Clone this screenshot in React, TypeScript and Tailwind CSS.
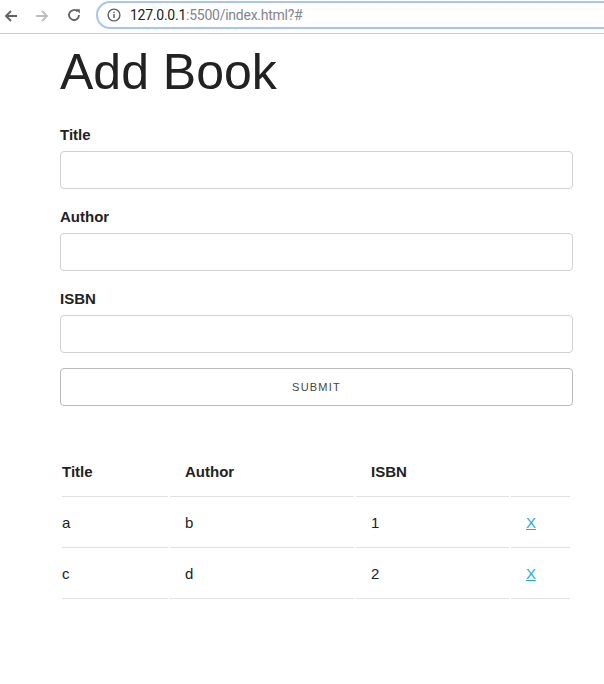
import React from "react";

function Chrome() {
  return (
    <div className="h-[34px] border-b border-[#c9c9c9] bg-white flex items-center relative overflow-hidden">
      <svg className="absolute left-[3px] top-[8px]" width="16" height="16" viewBox="0 0 16 16">
        <path d="M14 8H3M8 3L3 8l5 5" fill="none" stroke="#5f6368" strokeWidth="1.8" />
      </svg>
      <svg className="absolute left-[34px] top-[8px]" width="16" height="16" viewBox="0 0 16 16">
        <path d="M2 8h11M8 3l5 5-5 5" fill="none" stroke="#bdbdbd" strokeWidth="1.8" />
      </svg>
      <svg className="absolute left-[66px] top-[7px]" width="16" height="16" viewBox="0 0 16 16">
        <path d="M13 8a5 5 0 1 1-1.5-3.6" fill="none" stroke="#5f6368" strokeWidth="1.8" />
        <path d="M9.5 2.2h4.3v4.3z" fill="#5f6368" />
      </svg>
      <div className="absolute left-[96px] top-[1px] w-[540px] h-[28px] rounded-full border-2 border-[#a8c4f5] flex items-center">
        <svg className="ml-[9px]" width="14" height="14" viewBox="0 0 14 14">
          <circle cx="7" cy="7" r="5.9" fill="none" stroke="#5f6368" strokeWidth="1.4" />
          <rect x="6.25" y="6" width="1.5" height="4" fill="#5f6368" />
          <rect x="6.25" y="3.6" width="1.5" height="1.5" fill="#5f6368" />
        </svg>
        <span className="ml-[9px] text-[14px] tracking-[-0.25px] text-[#202124]" style={{ fontFamily: "Roboto, sans-serif" }}>
          127.0.0.1<span className="text-[#80868b]">:5500/index.html?#</span>
        </span>
      </div>
    </div>
  );
}

const Label = ({ children }: { children: React.ReactNode }) => (
  <label className="block text-[15px] leading-[24px] font-bold text-[#222] mb-[4px]">{children}</label>
);

const Input = () => (
  <input type="text" className="block w-full h-[38px] border border-[#d1d1d1] rounded-[4px] bg-white mb-[16px] outline-none" />
);

export default function App() {
  const rows = [
    ["a", "b", "1"],
    ["c", "d", "2"],
  ];
  return (
    <div className="min-h-[684px] bg-white text-[#222]" style={{ fontFamily: '"Liberation Sans", Arial, sans-serif' }}>
      <Chrome />
      <div className="w-[513px] ml-[60px] pt-[8px]">
        <h1 className="text-[50px] leading-[60px] font-normal tracking-[0px] mb-[21px] text-[#222]">Add Book</h1>
        <form onSubmit={(e) => e.preventDefault()}>
          <Label>Title</Label>
          <Input />
          <Label>Author</Label>
          <Input />
          <Label>ISBN</Label>
          <Input />
          <button
            type="submit"
            className="block w-full h-[38px] -mt-px border border-[#bbb] rounded-[4px] bg-transparent text-[11px] font-normal tracking-[1.2px] uppercase text-[#444]"
          >
            Submit
          </button>
        </form>
        <table className="mt-[40px] w-[512px] table-fixed border-separate border-spacing-[2px] text-[15px] leading-[24px]">
          <thead>
            <tr>
              <th className="w-[106px] text-left font-bold py-[12px] pr-[15px] pl-0 border-b border-[#e1e1e1]">Title</th>
              <th className="w-[184px] text-left font-bold py-[12px] px-[15px] border-b border-[#e1e1e1]">Author</th>
              <th className="w-[153px] text-left font-bold py-[12px] px-[15px] border-b border-[#e1e1e1]">ISBN</th>
              <th className="w-[59px] text-left font-bold py-[12px] pl-[15px] pr-0 border-b border-[#e1e1e1]"></th>
            </tr>
          </thead>
          <tbody>
            {rows.map((r, i) => (
              <tr key={i}>
                <td className="py-[12px] pr-[15px] pl-0 border-b border-[#e1e1e1]">{r[0]}</td>
                <td className="py-[12px] px-[15px] border-b border-[#e1e1e1]">{r[1]}</td>
                <td className="py-[12px] px-[15px] border-b border-[#e1e1e1]">{r[2]}</td>
                <td className="py-[12px] pl-[15px] pr-0 border-b border-[#e1e1e1]">
                  <a href="#" className="text-[#1eaedb] underline">X</a>
                </td>
              </tr>
            ))}
          </tbody>
        </table>
      </div>
    </div>
  );
}
